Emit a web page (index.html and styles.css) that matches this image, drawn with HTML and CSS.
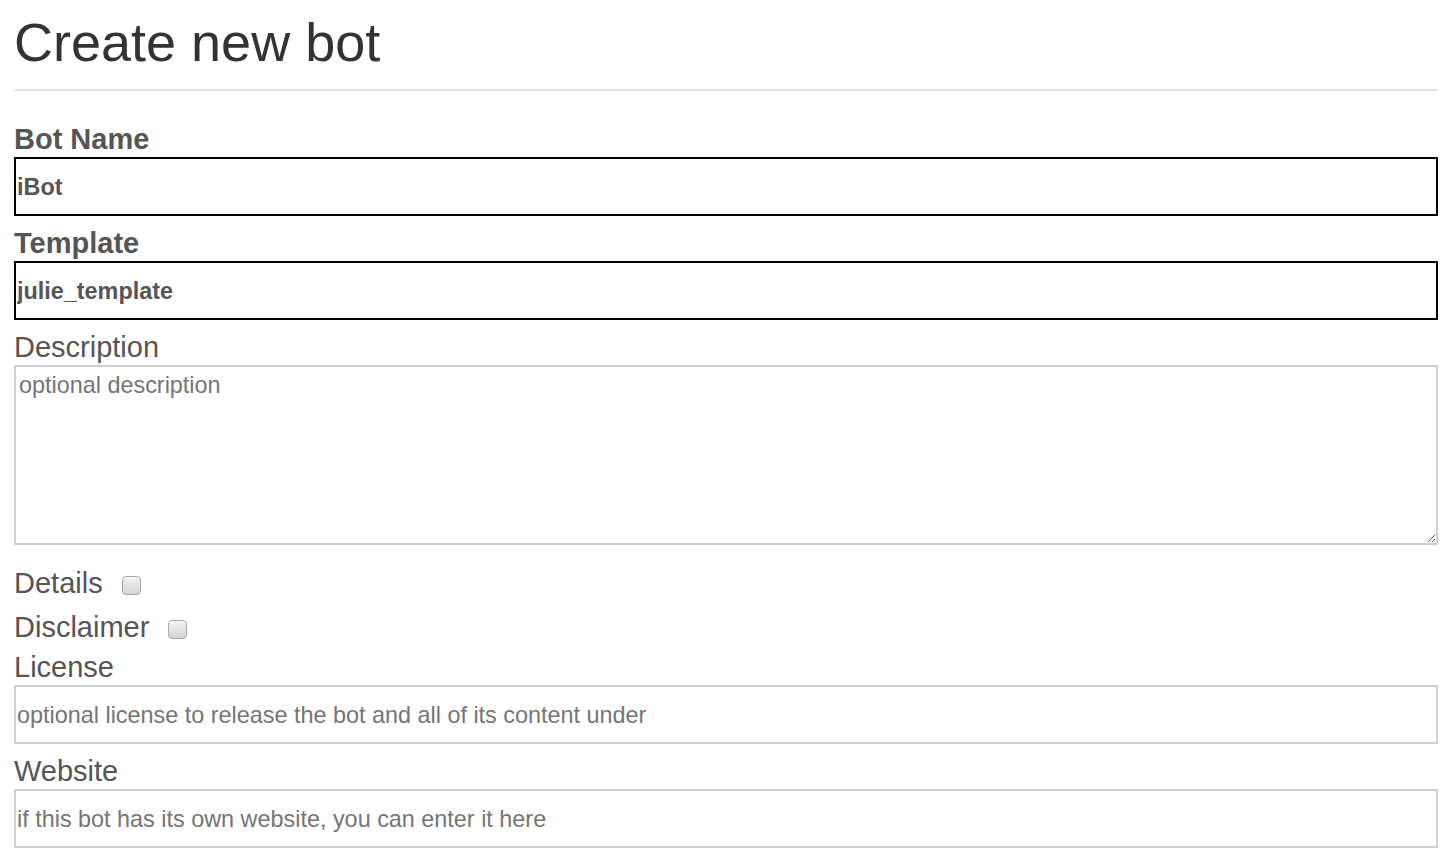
FILE: index.html
```html
<!DOCTYPE html>
<html lang="en">
<head>
<meta charset="utf-8">
<title>Create new bot</title>
<link rel="stylesheet" href="styles.css">
</head>
<body>
<main class="page">
  <h1 class="title">Create new bot</h1>
  <form class="bot-form">
    <label class="field-label field-label--strong first" for="bot-name">Bot Name</label>
    <input class="text-input text-input--strong" id="bot-name" type="text" value="iBot">

    <label class="field-label field-label--strong" for="bot-template">Template</label>
    <input class="text-input text-input--strong" id="bot-template" type="text" value="julie_template">

    <label class="field-label" for="bot-description">Description</label>
    <textarea class="text-area" id="bot-description" placeholder="optional description"></textarea>

    <div class="check-row check-row--details">
      <label class="check-label" for="bot-details">Details</label>
      <input class="check-box" id="bot-details" type="checkbox">
    </div>
    <div class="check-row check-row--disclaimer">
      <label class="check-label" for="bot-disclaimer">Disclaimer</label>
      <input class="check-box" id="bot-disclaimer" type="checkbox">
    </div>

    <label class="field-label field-label--after-checks" for="bot-license">License</label>
    <input class="text-input" id="bot-license" type="text" placeholder="optional license to release the bot and all of its content under">

    <label class="field-label" for="bot-website">Website</label>
    <input class="text-input" id="bot-website" type="text" placeholder="if this bot has its own website, you can enter it here">
  </form>
</main>
</body>
</html>
```

FILE: styles.css
```css
html, body {
  margin: 0;
  padding: 0;
  background: #ffffff;
}

body {
  font-family: "Liberation Sans", Arial, Helvetica, sans-serif;
  color: #555555;
}

.page {
  padding: 11px 14px 0 14px;
}

.title {
  margin: 0;
  font-size: 54px;
  font-weight: normal;
  line-height: 62px;
  color: #333333;
  padding-bottom: 16px;
  border-bottom: 2px solid #e4e4e4;
}

.bot-form {
  display: flex;
  flex-direction: column;
}

.field-label {
  display: block;
  font-size: 29px;
  line-height: 31px;
  color: #555555;
  margin-top: 12px;
  margin-bottom: 2px;
}

.field-label.first {
  margin-top: 33px;
}

.field-label--strong {
  font-weight: bold;
}

.field-label--after-checks {
  margin-top: 9px;
}

.text-input {
  display: block;
  box-sizing: border-box;
  width: 100%;
  height: 59px;
  margin: 0;
  padding: 1px 1px 0 1px;
  border: 2px solid #d0d0d0;
  border-radius: 0;
  font-family: "Liberation Sans", Arial, Helvetica, sans-serif;
  font-size: 23.4px;
  color: #555555;
  background: #ffffff;
  outline: none;
}

.text-input--strong {
  border-color: #000000;
  font-weight: bold;
}

.text-input::placeholder,
.text-area::placeholder {
  color: #757575;
  opacity: 1;
}

.text-area {
  display: block;
  box-sizing: border-box;
  width: 100%;
  height: 180px;
  margin: 0;
  padding: 5px 3px;
  border: 2px solid #d0d0d0;
  border-radius: 0;
  font-family: "Liberation Sans", Arial, Helvetica, sans-serif;
  font-size: 23.4px;
  line-height: 26px;
  color: #555555;
  background: #ffffff;
  outline: none;
}

.check-row {
  display: flex;
  align-items: flex-start;
  height: 31px;
}

.check-row--details {
  margin-top: 23px;
}

.check-row--disclaimer {
  margin-top: 13px;
}

.check-label {
  font-size: 29px;
  line-height: 31px;
  color: #555555;
}

.check-box {
  appearance: none;
  -webkit-appearance: none;
  box-sizing: border-box;
  width: 19px;
  height: 19px;
  margin: 8px 0 0 19px;
  border: 1px solid #a8a8a8;
  border-radius: 4px;
  background: linear-gradient(#f2f2f2, #d4d4d4);
  box-shadow: inset 0 1px 1px rgba(255, 255, 255, 0.8);
}
```
